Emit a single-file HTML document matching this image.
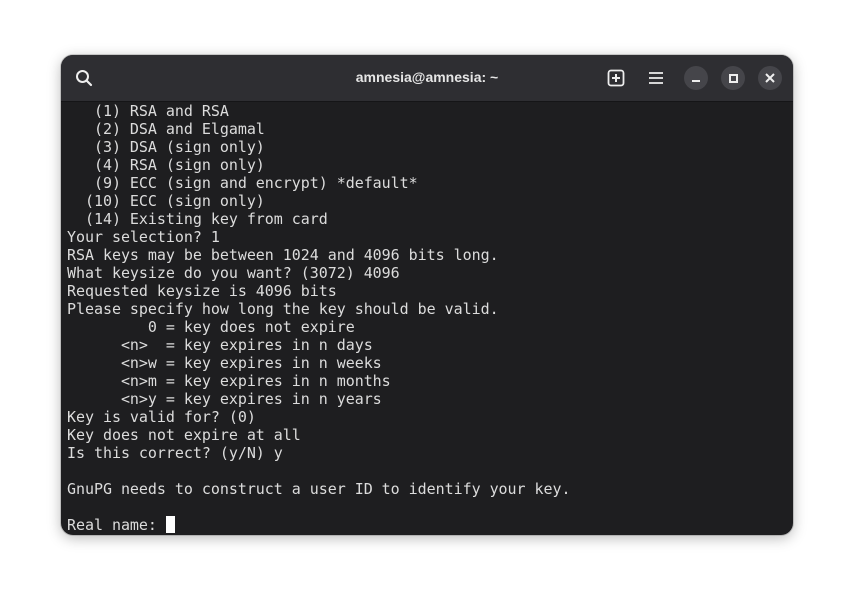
<!DOCTYPE html>
<html><head><style>
html,body{margin:0;padding:0;width:854px;height:602px;background:#fff;overflow:hidden}
.win{position:absolute;left:61px;top:55px;width:732px;height:480px;border-radius:12px;background:#1e1e20;overflow:hidden;box-shadow:0 3px 14px rgba(0,0,0,.28),0 0 0 1px rgba(0,0,0,.15)}
.hdr{position:absolute;left:0;top:0;width:732px;height:46px;background:#2e2e32;border-bottom:1px solid #151517}
.title{position:absolute;left:0;right:0;top:14px;text-align:center;color:#e6e6e6;font:bold 14px "Liberation Sans",sans-serif}
.term{position:absolute;left:6px;top:47px;margin:0;color:#dcdcdc;font:15px/18px "DejaVu Sans Mono","Liberation Mono",monospace;letter-spacing:-0.04px;white-space:pre}
.cur{display:inline-block;width:9px;height:17px;background:#fff;vertical-align:-3px}
.cb{position:absolute;top:11px;width:24px;height:24px;border-radius:50%;background:#45454a}
</style></head><body>
<div class="win">
<div class="hdr">
<svg style="position:absolute;left:14px;top:14px" width="18" height="18" viewBox="0 0 18 18"><circle cx="7.5" cy="7.5" r="5.5" fill="none" stroke="#eee" stroke-width="2"/><path d="M11.5 11.5L16 16" stroke="#eee" stroke-width="2.2" stroke-linecap="round"/></svg>
<div class="title">amnesia@amnesia: ~</div>
<svg style="position:absolute;left:546px;top:14px" width="18" height="18" viewBox="0 0 18 18"><rect x="1.5" y="1.5" width="15" height="15" rx="2.5" fill="none" stroke="#eee" stroke-width="1.8"/><path d="M9 5v8M5 9h8" stroke="#eee" stroke-width="2"/></svg>
<svg style="position:absolute;left:587px;top:15px" width="16" height="16" viewBox="0 0 16 16"><path d="M1 3h14M1 8h14M1 13h14" stroke="#eee" stroke-width="1.8"/></svg>
<div class="cb" style="left:623px"><div style="position:absolute;left:8px;top:14px;width:8px;height:2px;background:#eee"></div></div>
<div class="cb" style="left:660px"><div style="position:absolute;left:8px;top:8px;width:5px;height:5px;border:2px solid #eee"></div></div>
<div class="cb" style="left:697px"><svg style="position:absolute;left:7px;top:7px" width="10" height="10" viewBox="0 0 10 10"><path d="M1 1l8 8M9 1l-8 8" stroke="#eee" stroke-width="2"/></svg></div>
</div>
<pre class="term">   (1) RSA and RSA
   (2) DSA and Elgamal
   (3) DSA (sign only)
   (4) RSA (sign only)
   (9) ECC (sign and encrypt) *default*
  (10) ECC (sign only)
  (14) Existing key from card
Your selection? 1
RSA keys may be between 1024 and 4096 bits long.
What keysize do you want? (3072) 4096
Requested keysize is 4096 bits
Please specify how long the key should be valid.
         0 = key does not expire
      &lt;n&gt;  = key expires in n days
      &lt;n&gt;w = key expires in n weeks
      &lt;n&gt;m = key expires in n months
      &lt;n&gt;y = key expires in n years
Key is valid for? (0)
Key does not expire at all
Is this correct? (y/N) y

GnuPG needs to construct a user ID to identify your key.

Real name: <span class="cur"></span></pre>
</div>
</body></html>
